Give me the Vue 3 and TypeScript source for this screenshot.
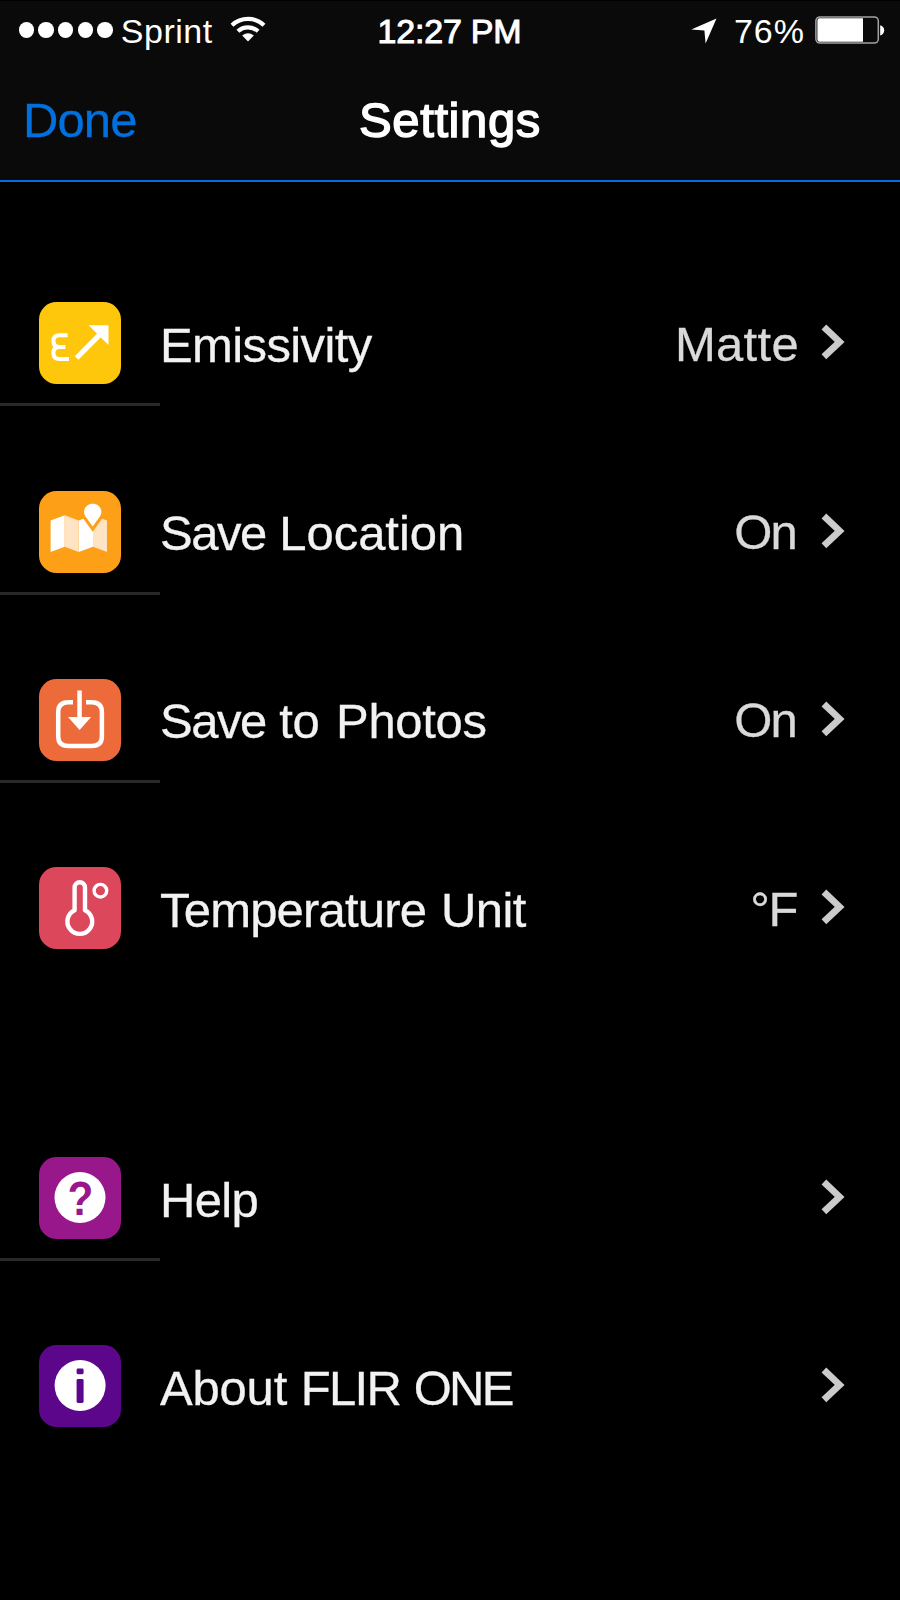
<script setup lang="ts">
type IconName = 'emissivity' | 'location' | 'photos' | 'temperature' | 'help' | 'about'

interface Word {
  text: string
  tracking: number
  gap?: number
}

interface SettingItem {
  icon: IconName
  label: Word[]
  value?: string
  divider: boolean
}

const groups: SettingItem[][] = [
  [
    { icon: 'emissivity', label: [{ text: 'Emissivity', tracking: -0.62 }], value: 'Matte', divider: true },
    {
      icon: 'location',
      label: [{ text: 'Save', tracking: -1.5 }, { text: 'Location', tracking: -0.05 }],
      value: 'On',
      divider: true,
    },
    {
      icon: 'photos',
      label: [
        { text: 'Save', tracking: -1.5 },
        { text: 'to', tracking: -0.35 },
        { text: 'Photos', tracking: -0.35, gap: 3 },
      ],
      value: 'On',
      divider: true,
    },
    {
      icon: 'temperature',
      label: [{ text: 'Temperature', tracking: -0.8 }, { text: 'Unit', tracking: -0.55, gap: 1 }],
      value: '°F',
      divider: false,
    },
  ],
  [
    { icon: 'help', label: [{ text: 'Help', tracking: -0.7 }], divider: true },
    {
      icon: 'about',
      label: [
        { text: 'About', tracking: -0.2 },
        { text: 'FLIR', tracking: -1.7, gap: 0 },
        { text: 'ONE', tracking: -2.7, gap: 0 },
      ],
      divider: false,
    },
  ],
]

const signalDots = 5
</script>

<template>
  <main class="screen">
    <header class="header">
      <div class="status">
        <div class="status-left">
          <span class="dots"><i v-for="n in signalDots" :key="n" class="dot"></i></span>
          <span class="carrier">Sprint</span>
          <svg class="wifi" width="36" height="28" viewBox="0 0 36 28">
            <g fill="none" stroke="#fff" stroke-width="4.2">
              <path d="M2 10.2 A23.5 23.5 0 0 1 34 10.2" />
              <path d="M7.9 16.2 A15 15 0 0 1 28.1 16.2" />
            </g>
            <path d="M12.2 20.6 Q18 16 23.8 20.6 L18 26.6 Z" fill="#fff" />
          </svg>
        </div>
        <div class="clock">12:27 PM</div>
        <div class="status-right">
          <svg class="arrow" width="26" height="26" viewBox="0 0 26 26">
            <path d="M25.5 .6 L14.6 25.5 L13.4 12.6 L.3 11.6 Z" fill="#fff" />
          </svg>
          <span class="percent">76%</span>
          <svg class="battery" width="70" height="28" viewBox="0 0 70 28">
            <rect x=".9" y=".9" width="62.4" height="26.2" rx="4" fill="none" stroke="#a3a3a3" stroke-width="1.5" />
            <path d="M4.6 2.3 H48 V25.8 H4.6 Q2.4 25.8 2.4 23.6 V4.5 Q2.4 2.3 4.6 2.3Z" fill="#fff" />
            <path d="M65.2 9.2 Q69.2 10.5 69.2 14.3 Q69.2 18.3 65.2 19.6Z" fill="#fff" />
          </svg>
        </div>
      </div>
      <nav class="nav">
        <a class="done">Done</a>
        <h1 class="title">Settings</h1>
        <span></span>
      </nav>
    </header>

    <section v-for="(group, g) in groups" :key="g" class="group">
      <div v-for="item in group" :key="item.icon" class="row" :class="[item.icon, { divided: item.divider }]">
        <svg class="icon" width="82" height="82" viewBox="0 0 82 82">
          <g v-if="item.icon === 'emissivity'">
            <path d="M28.6 33.2 H20.4 Q14.4 33.2 14.4 39 Q14.4 45 20.4 45 H26.4 M20.4 45 Q14.4 45 14.4 51 Q14.4 57 20.4 57 H30" fill="none" stroke="#fff" stroke-width="4" />
            <path d="M37.6 56 L61.5 31.8" fill="none" stroke="#fff" stroke-width="5.2" />
            <path d="M49.6 23.3 H69.5 V43 Z" fill="#fff" />
          </g>
          <g v-else-if="item.icon === 'location'">
            <path d="M11.6 29.6 L25.7 24.3 V55.7 L11.6 61 Z M39.7 29.6 L54 24.3 V55.7 L39.7 61 Z" fill="#fff" />
            <path d="M25.7 24.3 L39.7 29.6 V61 L25.7 55.7 Z M54 24.3 L68 29.6 V61 L54 55.7 Z" fill="#fee4c2" />
            <path d="M53.7 35.6 L46.7 25.8 C42.5 19.5 47 12.7 53.7 12.7 S64.9 19.5 60.7 25.8 Z" fill="#fff" stroke="#fd9f17" stroke-width="6" paint-order="stroke" />
          </g>
          <g v-else-if="item.icon === 'photos'">
            <path d="M34 23.2 H29.5 Q19.2 23.2 19.2 33 V57.2 Q19.2 67 29.5 67 H52.6 Q62.9 67 62.9 57.2 V33 Q62.9 23.2 52.6 23.2 H47" fill="none" stroke="#fff" stroke-width="4.5" />
            <path d="M38.3 11.5 H42.8 V38 H52.2 L40.6 51 L29 38 H38.3 Z" fill="#fff" />
          </g>
          <g v-else-if="item.icon === 'temperature'" fill="none" stroke="#fff">
            <path d="M35.6 43.2 V20.4 A5.2 5.2 0 0 1 46 20.4 V43.2 A12.4 12.4 0 1 1 35.6 43.2 Z" stroke-width="4.4" stroke-linejoin="round" />
            <circle cx="61.4" cy="23.7" r="6.3" stroke-width="3.4" />
          </g>
          <g v-else-if="item.icon === 'help'">
            <circle cx="41" cy="40.5" r="25.5" fill="#fff" />
            <text class="mark" transform="translate(41.3 57.6) scale(.88 1)" text-anchor="middle">?</text>
          </g>
          <g v-else>
            <circle cx="41.1" cy="40.5" r="25.5" fill="#fff" />
            <rect x="37.6" y="23.6" width="7" height="5.6" rx="1.4" fill="#5c068c" />
            <rect x="37.6" y="34" width="7" height="24" rx="1.4" fill="#5c068c" />
          </g>
        </svg>
        <span class="label">
          <template v-for="(word, w) in item.label" :key="w">
            <template v-if="w > 0">{{ ' ' }}</template>
            <span :style="{ letterSpacing: word.tracking + 'px', marginLeft: (word.gap ?? 0) + 'px' }">{{ word.text }}</span>
          </template>
        </span>
        <span v-if="item.value" class="value">{{ item.value }}</span>
        <svg class="chevron" width="24" height="36" viewBox="0 0 24 36">
          <path d="M2.9 3 L18.6 17.9 L2.9 32.8" fill="none" stroke="#cbcbcb" stroke-width="6.8" />
        </svg>
      </div>
    </section>
  </main>
</template>

<style>
body {
  margin: 0;
  background: #000;
}
</style>

<style scoped>
.screen {
  box-sizing: border-box;
  width: 900px;
  height: 1600px;
  overflow: hidden;
  background: #000;
  color: #f2f2f2;
  font-family: "Liberation Sans", Arial, sans-serif;
  font-size: 49px;
  line-height: 60px;
  white-space: nowrap;
}
.header {
  box-sizing: border-box;
  height: 182px;
  border-top: 1px solid #000;
  border-bottom: 2px solid #0070df;
  background: #0a0a0a;
}
.status {
  display: grid;
  grid-template-columns: 1fr auto 1fr;
  height: 60px;
  padding: 0 15px 0 18px;
  color: #fff;
  font-size: 34px;
}
.status-left,
.status-right {
  display: flex;
  align-items: flex-start;
}
.status-right {
  justify-content: flex-end;
}
.dots {
  display: flex;
  gap: 4.1px;
  padding: 21px 0 0 0.5px;
}
.dot {
  width: 15.6px;
  height: 15.6px;
  border-radius: 50%;
  background: #fff;
}
.carrier {
  margin-left: 8px;
  letter-spacing: 0.5px;
}
.wifi {
  margin: 14px 0 0 17.5px;
}
.clock {
  margin-right: 4px;
  letter-spacing: -0.2px;
  -webkit-text-stroke: 1px #fff;
}
.arrow {
  margin: 17px 17px 0 0;
}
.percent {
  letter-spacing: 1px;
}
.battery {
  margin: 15px 0 0 10px;
}
.nav {
  display: grid;
  grid-template-columns: 1fr auto 1fr;
  height: 118px;
  padding: 29px 22px 0;
  box-sizing: border-box;
}
.done {
  padding-left: 1px;
  color: #0070df;
  letter-spacing: -0.9px;
  -webkit-text-stroke: 0.3px #0070df;
}
.title {
  margin: 0;
  color: #fff;
  font-size: 49px;
  font-weight: 400;
  letter-spacing: 0.6px;
  -webkit-text-stroke: 1.5px #fff;
}
.group {
  padding-top: 36px;
}
.group + .group {
  padding-top: 101px;
}
.row {
  box-sizing: border-box;
  display: flex;
  align-items: center;
  height: 188.4px;
  padding: 84px 55px 22px 39px;
  background: linear-gradient(#292929, #292929) 0 100% / 160px 0 no-repeat;
}
.divided {
  background-size: 160px 3px;
}
.icon {
  flex: none;
  border-radius: 17.5px;
}
.label {
  flex: 1;
  margin-left: 39px;
  padding-top: 3px;
  -webkit-text-stroke: 0.3px #f2f2f2;
}
.help .label {
  padding-top: 4px;
}
.value {
  padding-top: 1px;
  color: #d9d9d9;
  -webkit-text-stroke: 0.3px #d9d9d9;
}
.chevron {
  flex: none;
  margin: 0 0 2px 23px;
}
.mark {
  fill: #98178b;
  font-size: 48px;
  font-weight: 700;
}
.emissivity .icon { background: #fec70b; }
.location .icon { background: #fd9f17; }
.photos .icon { background: #ed6b3a; }
.temperature .icon { background: #dc475b; }
.help .icon { background: #98178b; }
.about .icon { background: #5c068c; }

.emissivity .value { letter-spacing: 0.3px; margin-right: -1px; }
.location .value,
.photos .value { letter-spacing: -1.8px; margin-right: 2px; }
.temperature .value { letter-spacing: -1.4px; margin-right: 1px; }
</style>
